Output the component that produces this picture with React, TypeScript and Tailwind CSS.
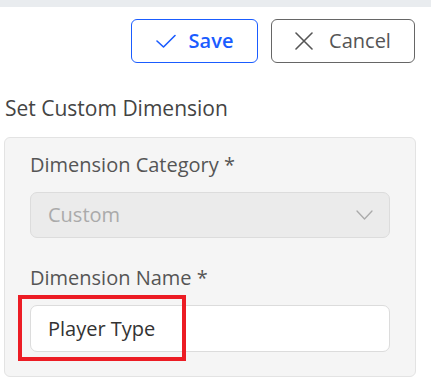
import React from "react";

export default function App() {
  return (
    <div className="w-[431px] h-[387px] bg-white overflow-hidden" style={{ fontFamily: '"Open Sans", sans-serif' }}>
      <div className="h-[7px] bg-[#e9ecef]" />
      <div className="flex justify-end gap-[13px] pr-[16px] mt-[12px]">
        <button className="w-[127px] h-[44px] rounded-[6px] border border-[#1a5cff] flex items-center justify-center gap-[13px] text-[#1a5cff] text-[20px] font-semibold leading-none">
          <svg width="20" height="14" viewBox="0 0 20 14" fill="none">
            <path d="M1 7 L7.5 13 L19 1.5" stroke="#1a5cff" strokeWidth="1.6" strokeLinecap="round" strokeLinejoin="round" />
          </svg>
          <span>Save</span>
        </button>
        <button className="w-[144px] h-[44px] rounded-[6px] border border-[#666] flex items-center justify-center gap-[16px] text-[#555] text-[20px] leading-none">
          <svg width="18" height="18" viewBox="0 0 18 18" fill="none">
            <path d="M1 1 L17 17 M17 1 L1 17" stroke="#555" strokeWidth="1.6" strokeLinecap="round" />
          </svg>
          <span>Cancel</span>
        </button>
      </div>
      <div className="mt-[31px] pl-[5px] text-[21px] leading-[28px] text-[#444]">Set Custom Dimension</div>
      <div className="mt-[15px] ml-[4px] w-[412px] h-[240px] bg-[#f5f5f5] border border-[#e3e3e3] rounded-[6px] px-[25px] pt-[13px]">
        <div className="text-[20px] leading-[28px] text-[#555]">Dimension Category *</div>
        <div className="mt-[13px] h-[46px] rounded-[7px] bg-[#ebebeb] border border-[#dcdcdc] flex items-center justify-between pl-[17px] pr-[16px]">
          <span className="text-[20px] leading-[26px] text-[#aaa]">Custom</span>
          <svg width="17" height="10" viewBox="0 0 17 10" fill="none">
            <path d="M1 1 L8.5 9 L16 1" stroke="#aaa" strokeWidth="1.3" strokeLinecap="round" strokeLinejoin="round" />
          </svg>
        </div>
        <div className="mt-[26px] text-[20px] leading-[28px] text-[#555]">Dimension Name *</div>
        <div className="relative mt-[13px] h-[47px] rounded-[7px] bg-white border border-[#dcdcdc] flex items-center pl-[17px]">
          <span className="text-[20px] leading-[26px] text-[#333]">Player Type</span>
          <div className="absolute left-[-13px] top-[-11px] w-[168px] h-[66px] border-[4px] border-[#ec1c24]" />
        </div>
      </div>
    </div>
  );
}
